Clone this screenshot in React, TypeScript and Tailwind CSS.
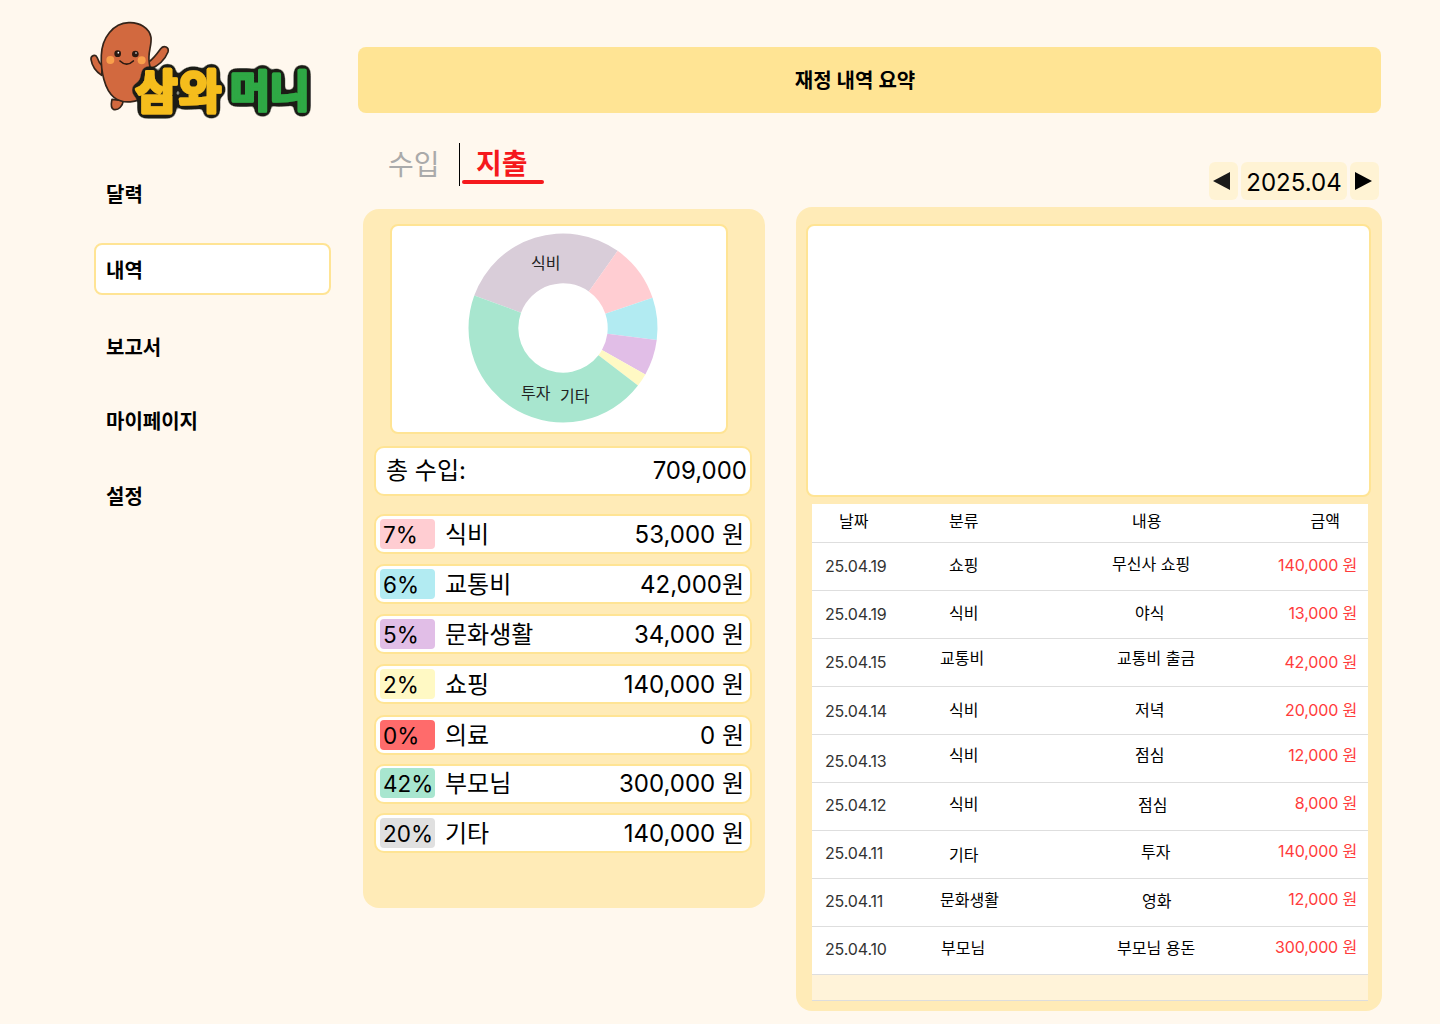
const navItems = [
  { label: '달력', cls: 'pt-[2px]' },
  { label: '내역', cls: 'pt-[4px]' },
  { label: '보고서', cls: 'pt-[6px]' },
  { label: '마이페이지', cls: 'pt-[4px]' },
  { label: '설정', cls: 'pt-[2px]' },
]

const categories = [
  { pct: '7%', name: '식비', amount: '53,000 원', badge: 'bg-[#ffcdd2]', cls: 'pt-[2px]' },
  { pct: '6%', name: '교통비', amount: '42,000원', badge: 'bg-[#b2ebf2]', cls: 'pt-[2px]' },
  { pct: '5%', name: '문화생활', amount: '34,000 원', badge: 'bg-[#e1bee7]', cls: 'pt-[2px]' },
  { pct: '2%', name: '쇼핑', amount: '140,000 원', badge: 'bg-[#fff9c4]', cls: 'pt-[2px]' },
  { pct: '0%', name: '의료', amount: '0 원', badge: 'bg-[#ff6b6b]', cls: 'mt-px pt-[2px]' },
  { pct: '42%', name: '부모님', amount: '300,000 원', badge: 'bg-[#a8e6cf]', cls: '-mt-px' },
  { pct: '20%', name: '기타', amount: '140,000 원', badge: 'bg-[#e0e0e0]', cls: '-mt-px pt-[2px]' },
]

const rows = [
  { date: '25.04.19', cat: '쇼핑', text: '무신사 쇼핑', amount: '140,000 원', rowCls: 'pb-[2px]', dateCls: '', catCls: 'pl-[49px] pb-[2px]', textCls: 'pl-[72px] pb-[4px]', amtCls: 'pb-[2px]' },
  { date: '25.04.19', cat: '식비', text: '야식', amount: '13,000 원', rowCls: 'pb-[2px]', dateCls: '', catCls: 'pl-[49px] pb-[2px]', textCls: 'pl-[95px] pb-[2px]', amtCls: 'pb-[2px]' },
  { date: '25.04.15', cat: '교통비', text: '교통비 출금', amount: '42,000 원', rowCls: 'pb-[2px]', dateCls: '', catCls: 'pl-[40px] pb-[8px]', textCls: 'pl-[77px] pb-[8px]', amtCls: '' },
  { date: '25.04.14', cat: '식비', text: '저녁', amount: '20,000 원', rowCls: 'pb-[2px]', dateCls: 'pt-[2px]', catCls: 'pl-[49px]', textCls: 'pl-[95px]', amtCls: '' },
  { date: '25.04.13', cat: '식비', text: '점심', amount: '12,000 원', rowCls: 'pb-[2px]', dateCls: 'pt-[6px]', catCls: 'pl-[49px] pb-[6px]', textCls: 'pl-[95px] pb-[6px]', amtCls: 'pb-[6px]' },
  { date: '25.04.12', cat: '식비', text: '점심', amount: '8,000 원', rowCls: 'pb-[4px]', dateCls: '', catCls: 'pl-[49px] pb-[2px]', textCls: 'pl-[98px]', amtCls: 'pb-[4px]' },
  { date: '25.04.11', cat: '기타', text: '투자', amount: '140,000 원', rowCls: 'pb-[4px]', dateCls: '', catCls: 'pl-[49px] pt-[4px]', textCls: 'pl-[101px] pb-[2px]', amtCls: 'pb-[4px]' },
  { date: '25.04.11', cat: '문화생활', text: '영화', amount: '12,000 원', rowCls: 'pb-[4px]', dateCls: '', catCls: 'pl-[40px] pb-[2px]', textCls: 'pl-[102px]', amtCls: 'pb-[4px]' },
  { date: '25.04.10', cat: '부모님', text: '부모님 용돈', amount: '300,000 원', rowCls: 'pb-[4px]', dateCls: '', catCls: 'pl-[41px] pb-[2px]', textCls: 'pl-[77px] pb-[2px]', amtCls: 'pb-[4px]' },
]

// angles are clockwise from 12 o'clock
const slices = [
  { from: -69.9, to: 35.3, color: '#d9cdd9' },
  { from: 35.3, to: 71.4, color: '#ffcdd2' },
  { from: 71.4, to: 97.3, color: '#b2ebf2' },
  { from: 97.3, to: 119.4, color: '#e1bee7' },
  { from: 119.4, to: 127.5, color: '#fff9c4' },
  { from: 127.5, to: 290.1, color: '#a8e6cf' },
]

function slicePath(from: number, to: number) {
  const cx = 100
  const cy = 100
  const R = 94.5
  const r = 44.7
  const pt = (rad: number, deg: number) => {
    const a = (deg * Math.PI) / 180
    return `${(cx + rad * Math.sin(a)).toFixed(2)} ${(cy - rad * Math.cos(a)).toFixed(2)}`
  }
  const large = to - from > 180 ? 1 : 0
  return `M${pt(R, from)} A${R} ${R} 0 ${large} 1 ${pt(R, to)} L${pt(r, to)} A${r} ${r} 0 ${large} 0 ${pt(r, from)} Z`
}

function Logo() {
  return (
    <svg width="230" height="100" viewBox="54 57 690 300" className="block">
      <defs>
        <filter id="logo-outline" x="-15%" y="-25%" width="130%" height="150%">
          <feGaussianBlur in="SourceAlpha" stdDeviation="9" />
          <feComponentTransfer result="edge-mask">
            <feFuncA type="linear" slope="14" intercept="-1" />
          </feComponentTransfer>
          <feFlood floodColor="#1a1f17" />
          <feComposite in2="edge-mask" operator="in" result="edge" />
          <feMerge>
            <feMergeNode in="edge" />
            <feMergeNode in="SourceGraphic" />
          </feMerge>
        </filter>
      </defs>
      <g fill="#d2693f" stroke="#33241a" strokeWidth="5" strokeLinejoin="round">
        <path d="M95 226 C80 216 66 198 63 178 C62 166 76 162 81 172 C85 184 90 192 97 198 Z" />
        <path d="M126 298 C124 310 120 322 130 328 C146 332 158 318 160 302 Z" />
        <path d="M236 186 C250 176 262 160 272 146 C282 134 298 142 294 156 C286 176 268 196 240 208 Z" />
        <path d="M176 68 C208 66 238 84 243 112 C246 136 232 160 238 190 C244 222 250 262 226 286 C204 308 160 314 132 292 C104 270 92 214 94 166 C96 112 130 70 176 68 Z" />
      </g>
      <circle cx="121" cy="180" r="12" fill="#f9a04b" />
      <circle cx="215" cy="181" r="12" fill="#f9a04b" />
      <circle cx="143" cy="161" r="10" fill="#2a1a12" />
      <circle cx="196" cy="162" r="10" fill="#2a1a12" />
      <circle cx="145" cy="158" r="2.5" fill="#fff" />
      <circle cx="198" cy="159" r="2.5" fill="#fff" />
      <path d="M150 183 Q170 202 190 183" fill="none" stroke="#2a1a12" strokeWidth="5" strokeLinecap="round" />
      <text
        x="196"
        y="323"
        fontSize="138"
        fontWeight="700"
        letterSpacing="4"
        fill="#f5bd1f"
        stroke="#f5bd1f"
        strokeWidth="10"
        strokeLinejoin="round"
        filter="url(#logo-outline)"
        fontFamily="'Noto Sans CJK KR', sans-serif"
      >
        삼와
      </text>
      <text
        x="480"
        y="320"
        fontSize="130"
        fontWeight="700"
        fill="#2fa844"
        stroke="#2fa844"
        strokeWidth="10"
        strokeLinejoin="round"
        filter="url(#logo-outline)"
        fontFamily="'Noto Sans CJK KR', sans-serif"
      >
        머니
      </text>
    </svg>
  )
}

function Donut() {
  return (
    <svg width="200" height="200" viewBox="0 0 200 200" className="block">
      {slices.map((s) => (
        <path key={s.color} d={slicePath(s.from, s.to)} fill={s.color} />
      ))}
      <text x="68" y="41" fontSize="16" fill="#222">식비</text>
      <text x="58" y="171" fontSize="16" fill="#222">투자</text>
      <text x="97" y="174" fontSize="16" fill="#222">기타</text>
    </svg>
  )
}

export default function App() {
  return (
    <div className="flex h-[1024px] w-full overflow-hidden bg-[#fff8ee] font-['Inter','Noto_Sans_CJK_KR',sans-serif] text-black">
      {/* sidebar */}
      <aside className="w-[358px] shrink-0 pl-[94px] pt-[19px]">
        <div className="-ml-[6px]">
          <Logo />
        </div>
        <nav className="mt-[48.5px] flex w-[237px] flex-col gap-[23.5px]">
          {navItems.map((item) => (
            <div
              key={item.label}
              className={`flex h-[52px] items-center rounded-lg border-2 px-[10px] text-[20px] font-semibold ${item.cls} ${
                item.label === '내역' ? 'border-[#ffe494] bg-white' : 'border-transparent'
              }`}
            >
              {item.label}
            </div>
          ))}
        </nav>
      </aside>

      <main className="w-[1024px] shrink-0 pt-[47px]">
        <div className="flex h-[66px] w-[1023px] items-center justify-center rounded-lg bg-[#ffe494] pr-[29px] pt-px text-[20px] font-semibold">
          재정 내역 요약
        </div>

        <div className="flex h-[94px] w-[1021px] items-start justify-between">
          <div className="flex pt-[30px]">
            <div className="w-[101px] pl-[30px] pt-[4px] text-[28px] leading-[36px] text-[#aaaaaa]">수입</div>
            <div className="relative h-[43px] w-[85px] border-l border-black">
              <span className="absolute left-[16px] top-[3px] text-[28px] font-bold leading-[36px] text-[#f5191c]">지출</span>
              <span className="absolute bottom-[2px] left-[2px] h-[4px] w-[82px] rounded-full bg-[#f5191c]" />
            </div>
          </div>
          <div className="flex gap-[3px] pt-[49px]">
            <button className="flex h-[38px] w-[29px] items-center justify-center rounded-md bg-[#fff3d4] pr-[4px]">
              <svg width="17" height="18" viewBox="0 0 17 18"><path d="M0 9 L17 0 V18 Z" fill="#1a1a1a" /></svg>
            </button>
            <div className="flex h-[38px] w-[106px] items-center justify-center rounded-md bg-[#fff3d4] pt-[3px] text-[24px]">2025.04</div>
            <button className="flex h-[38px] w-[29px] items-center justify-center rounded-md bg-[#fff3d4] pr-[2px]">
              <svg width="17" height="18" viewBox="0 0 17 18"><path d="M17 9 L0 0 V18 Z" fill="#000" /></svg>
            </button>
          </div>
        </div>

        <div className="flex items-start">
          {/* left panel */}
          <section className="ml-[5px] mt-[2px] h-[699px] w-[402px] rounded-2xl bg-[#ffebb7] pl-[11px] pt-[15px]">
            <div className="ml-[16px] flex h-[210px] w-[338px] items-center justify-center rounded-lg border-2 border-[#ffe494] bg-white pb-[3px] pl-[7px]">
              <Donut />
            </div>
            <div className="mt-[12px] flex h-[50px] w-[378px] items-center justify-between rounded-[10px] border-2 border-[#ffe494] bg-white pl-[10px] pr-[3px] text-[24px]">
              <span>총 수입:</span>
              <span>709,000</span>
            </div>
            <div className="mt-[18px] flex flex-col gap-[10px]">
              {categories.map((c) => (
                <div key={c.name} className={`flex h-[40px] w-[378px] items-center rounded-[10px] border-2 border-[#ffe494] bg-white pl-[4px] pr-[6px] text-[24px] ${c.cls}`}>
                  <span className={`-mt-[2px] flex h-[30px] w-[55px] items-center rounded-[4px] pl-[3px] pt-[2px] text-[22.5px] ${c.badge}`}>{c.pct}</span>
                  <span className="ml-[10px]">{c.name}</span>
                  <span className="ml-auto">{c.amount}</span>
                </div>
              ))}
            </div>
          </section>

          {/* right panel */}
          <section className="ml-[31px] h-[804px] w-[586px] rounded-2xl bg-[#ffebb7] pl-[10px] pt-[17px]">
            <div className="h-[273px] w-[565px] rounded-lg border-2 border-[#ffe494] bg-white" />
            <div className="ml-[6px] mt-[7px] w-[556px]">
              <div className="flex h-[39px] items-center border-b border-[#dedede] bg-white pb-[4px] text-[16px]">
                <span className="w-[88px] pl-[27px]">날짜</span>
                <span className="w-[140px] pl-[49px]">분류</span>
                <span className="w-[200px] pl-[92px]">내용</span>
                <span className="w-[128px] pr-[28px] text-right">금액</span>
              </div>
              {rows.map((r, i) => (
                <div key={i} className={`flex h-[48px] items-center border-b border-[#dedede] bg-white text-[16px] ${r.rowCls}`}>
                  <span className={`w-[88px] pl-[13px] tracking-[-0.15px] text-[#333333] ${r.dateCls}`}>{r.date}</span>
                  <span className={`w-[140px] ${r.catCls}`}>{r.cat}</span>
                  <span className={`w-[200px] ${r.textCls}`}>{r.text}</span>
                  <span className={`w-[128px] pr-[11px] text-right tracking-[-0.15px] text-[#ff3b3b] ${r.amtCls}`}>{r.amount}</span>
                </div>
              ))}
              <div className="h-[26px] border-b border-[#dddddd] bg-[#fff3d9]" />
            </div>
          </section>
        </div>
      </main>
    </div>
  )
}
